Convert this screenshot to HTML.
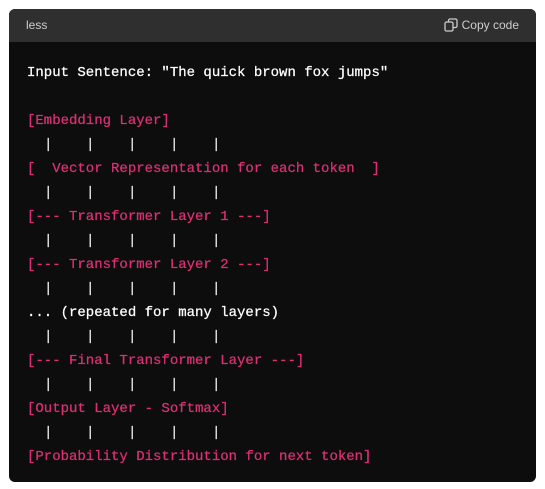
<!DOCTYPE html>
<html><head><meta charset="utf-8"><style>
html,body{margin:0;padding:0;background:#fff;width:545px;height:489px;overflow:hidden}
.box{position:absolute;left:9px;top:9px;width:527px;height:473px;background:#0d0d0d;border-radius:6px;overflow:hidden}
.hd{height:33px;background:#2f2f2f;position:relative;font-family:"Liberation Sans",sans-serif;font-size:12px;color:#cdcdcd}
.hd .l{position:absolute;left:17px;top:9px}
.hd .r{position:absolute;right:17px;top:9px;display:flex;align-items:center;gap:4px}
.code{position:absolute;left:18px;top:52px;font-family:"Liberation Mono",monospace;font-size:14px;line-height:24px;color:#fff;white-space:pre;-webkit-text-stroke:0.25px currentColor}
.p{color:#de2f74}
.pipes{position:relative;height:24px}
.pipes span{position:absolute;top:0;color:#e8eef5}
</style></head><body>
<div class="box">
<div class="hd"><span class="l">less</span><span class="r"><svg width="14" height="14" viewBox="0 0 14 14" fill="none" stroke="#cdcdcd" stroke-width="1.3"><rect x="1" y="4" width="8" height="9" rx="1.5"/><path d="M4.5 4V2.5A1.5 1.5 0 0 1 6 1h5.5A1.5 1.5 0 0 1 13 2.5V8a1.5 1.5 0 0 1-1.5 1.5H9"/></svg>Copy code</span></div>
<div class="code"><div>Input Sentence: "The quick brown fox jumps"</div><div> </div><div class="p">[Embedding Layer]</div><div class="pipes"><span style="left:17px">|</span><span style="left:59px">|</span><span style="left:101px">|</span><span style="left:143px">|</span><span style="left:185px">|</span></div><div class="p">[  Vector Representation for each token  ]</div><div class="pipes"><span style="left:17px">|</span><span style="left:59px">|</span><span style="left:101px">|</span><span style="left:143px">|</span><span style="left:185px">|</span></div><div class="p">[--- Transformer Layer 1 ---]</div><div class="pipes"><span style="left:17px">|</span><span style="left:59px">|</span><span style="left:101px">|</span><span style="left:143px">|</span><span style="left:185px">|</span></div><div class="p">[--- Transformer Layer 2 ---]</div><div class="pipes"><span style="left:17px">|</span><span style="left:59px">|</span><span style="left:101px">|</span><span style="left:143px">|</span><span style="left:185px">|</span></div><div>... (repeated for many layers)</div><div class="pipes"><span style="left:17px">|</span><span style="left:59px">|</span><span style="left:101px">|</span><span style="left:143px">|</span><span style="left:185px">|</span></div><div class="p">[--- Final Transformer Layer ---]</div><div class="pipes"><span style="left:17px">|</span><span style="left:59px">|</span><span style="left:101px">|</span><span style="left:143px">|</span><span style="left:185px">|</span></div><div class="p">[Output Layer - Softmax]</div><div class="pipes"><span style="left:17px">|</span><span style="left:59px">|</span><span style="left:101px">|</span><span style="left:143px">|</span><span style="left:185px">|</span></div><div class="p">[Probability Distribution for next token]</div></div>
</div>
</body></html>
